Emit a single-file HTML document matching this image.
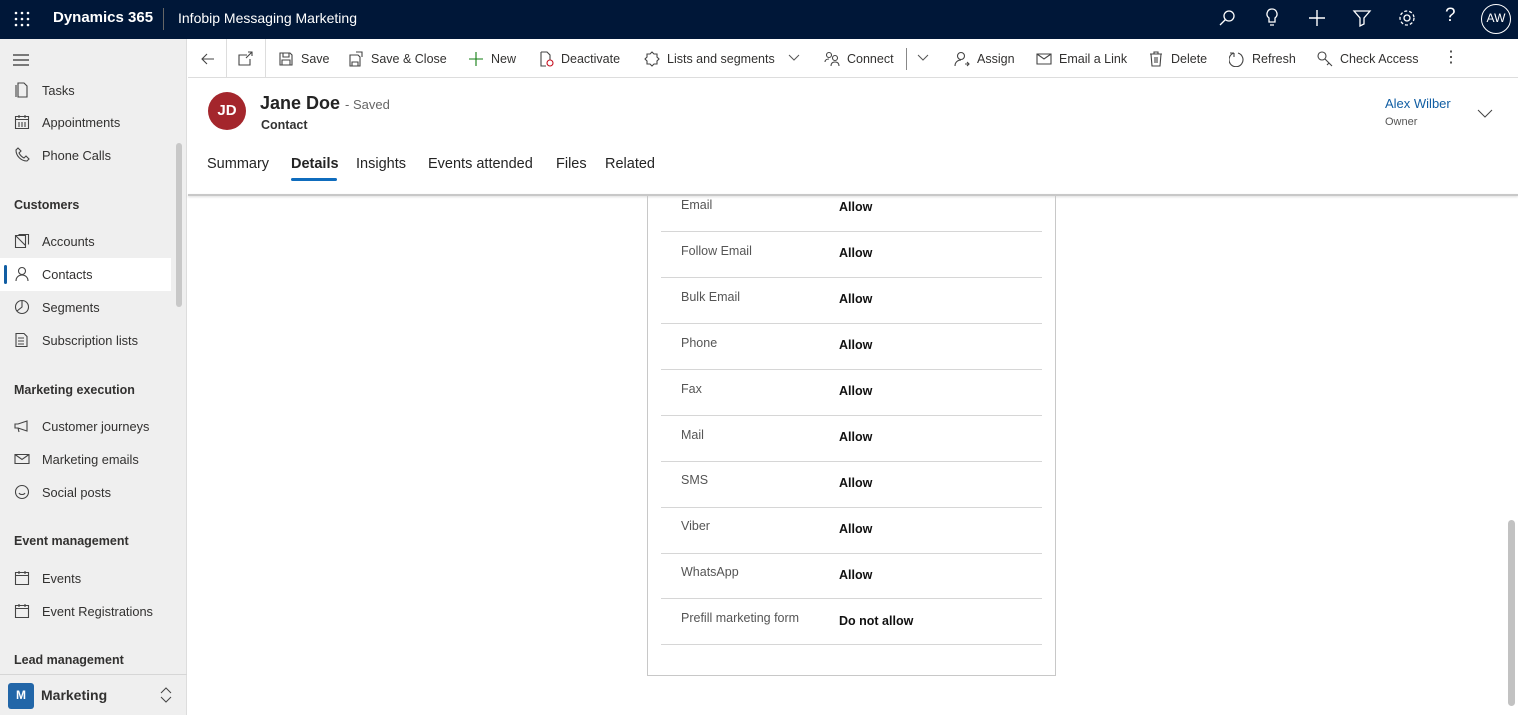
<!DOCTYPE html>
<html><head><meta charset="utf-8"><style>
*{box-sizing:border-box;margin:0;padding:0}
body{width:1518px;height:715px;overflow:hidden;font-family:"Segoe UI","Liberation Sans",sans-serif;background:#fff;position:relative;color:#323130}
.top{position:absolute;left:0;top:0;width:1518px;height:39px;background:#001738;color:#fff}
.abs{position:absolute}
.side{position:absolute;left:0;top:39px;width:187px;height:676px;background:#efefef;border-right:1px solid #ddd}
.ni{position:absolute;left:14px;font-size:12.8px;color:#323130;display:flex;align-items:center}
.ni svg{width:16px;height:16px;margin-right:12px;fill:none;stroke:#444;stroke-width:1.1}
.sh{position:absolute;left:14px;font-size:12.5px;font-weight:600;color:#323130}
.cmd{position:absolute;top:39px;left:188px;right:0;height:39px;border-bottom:1px solid #ddd;font-size:12.5px;color:#323130}
.ci{position:absolute;top:0;height:39px;display:flex;align-items:center}
.ci svg{width:16px;height:16px;margin-right:7px;fill:none;stroke:#444;stroke-width:1.1}
.tab{position:absolute;top:156px;font-size:14.5px;color:#242424}
.lab{position:absolute;left:681px;font-size:12.5px;color:#555}
.val{position:absolute;left:839px;font-size:12.5px;font-weight:700;color:#111}
.sep{position:absolute;left:661px;width:381px;height:1px;background:#d6d6d6}
</style></head><body>
<div class="top">
 <svg class="abs" style="left:14px;top:11px" width="16" height="16" fill="#fff"><g><circle cx="2" cy="2" r="1.3"/><circle cx="8" cy="2" r="1.3"/><circle cx="14" cy="2" r="1.3"/><circle cx="2" cy="8" r="1.3"/><circle cx="8" cy="8" r="1.3"/><circle cx="14" cy="8" r="1.3"/><circle cx="2" cy="14" r="1.3"/><circle cx="8" cy="14" r="1.3"/><circle cx="14" cy="14" r="1.3"/></g></svg>
 <div class="abs" style="left:53px;top:9px;font-size:15px;font-weight:600">Dynamics 365</div>
 <div class="abs" style="left:163px;top:8px;width:1px;height:22px;background:#666"></div>
 <div class="abs" style="left:178px;top:10px;font-size:14px">Infobip Messaging Marketing</div>
 <svg class="abs" style="left:1217px;top:8px" width="20" height="20" fill="none" stroke="#fff" stroke-width="1.3"><circle cx="12" cy="8" r="5"/><path d="M8.5 11.5L3 17"/></svg>
 <svg class="abs" style="left:1262px;top:7px" width="20" height="22" fill="none" stroke="#fff" stroke-width="1.3"><path d="M10 2a5 5 0 0 0-3 9v4h6v-4a5 5 0 0 0-3-9zM8 18h4"/></svg>
 <svg class="abs" style="left:1307px;top:8px" width="20" height="20" stroke="#fff" stroke-width="1.4"><path d="M10 2v16M2 10h16"/></svg>
 <svg class="abs" style="left:1352px;top:8px" width="20" height="20" fill="none" stroke="#fff" stroke-width="1.3"><path d="M2 3h16l-6 7v6l-4 2v-8z"/></svg>
 <svg class="abs" style="left:1397px;top:8px" width="20" height="20" fill="none" stroke="#fff" stroke-width="1.3"><circle cx="10" cy="10" r="3"/><circle cx="10" cy="10" r="7" stroke-dasharray="3 2"/></svg>
 <div class="abs" style="left:1445px;top:5px;font-size:19px">?</div>
 <div class="abs" style="left:1481px;top:4px;width:30px;height:30px;border:1.5px solid #fff;border-radius:50%;font-size:12px;text-align:center;line-height:27px">AW</div>
</div>

<div class="side">
 <svg class="abs" style="left:13px;top:14px" width="16" height="14" stroke="#333" stroke-width="1.2"><path d="M0 2h16M0 7h16M0 12h16"/></svg>
 <div class="ni" style="top:43px"><svg viewBox="0 0 16 16"><path d="M4 1h6l3 3v11H4zM2 3v12"/></svg>Tasks</div>
 <div class="ni" style="top:75px"><svg viewBox="0 0 16 16"><path d="M1.5 2.5h13v12h-13zM1.5 5.5h13M5 1v3M11 1v3M5 8v5M8 8v5M11 8v5"/></svg>Appointments</div>
 <div class="ni" style="top:108px"><svg viewBox="0 0 16 16"><path d="M4 1l3 3-2 2c1 2 3 4 5 5l2-2 3 3-2 2C7 14 2 9 2 3z"/></svg>Phone Calls</div>
 <div class="sh" style="top:159px">Customers</div>
 <div class="ni" style="top:194px"><svg viewBox="0 0 16 16"><path d="M1.5 2.5h10v12h-10zM4.5 1.5h10v10M1.5 2.5l10 10"/></svg>Accounts</div>
 <div class="abs" style="left:0;top:219px;width:171px;height:33px;background:#fff"></div>
 <div class="abs" style="left:4px;top:226px;width:3px;height:19px;background:#115ea3;border-radius:2px"></div>
 <div class="ni" style="top:227px"><svg viewBox="0 0 16 16"><circle cx="8" cy="5" r="3.5"/><path d="M2 15c0-4 3-6 6-6s6 2 6 6"/></svg>Contacts</div>
 <div class="ni" style="top:260px"><svg viewBox="0 0 16 16"><circle cx="8" cy="8" r="6.5"/><path d="M8 1.5v6.5l-5 4"/></svg>Segments</div>
 <div class="ni" style="top:293px"><svg viewBox="0 0 16 16"><path d="M2 1.5h8l3 3v10H2zM4 6h6M4 9h6M4 12h6"/></svg>Subscription lists</div>
 <div class="sh" style="top:344px">Marketing execution</div>
 <div class="ni" style="top:379px"><svg viewBox="0 0 16 16"><path d="M1 6h3l9-3v10L4 10H1zM4 10l1 4"/></svg>Customer journeys</div>
 <div class="ni" style="top:412px"><svg viewBox="0 0 16 16"><path d="M1 3.5h14v9H1zM1 3.5l7 5 7-5"/></svg>Marketing emails</div>
 <div class="ni" style="top:445px"><svg viewBox="0 0 16 16"><circle cx="8" cy="8" r="6.5"/><path d="M5 9c1 2 5 2 6 0"/></svg>Social posts</div>
 <div class="sh" style="top:495px">Event management</div>
 <div class="ni" style="top:531px"><svg viewBox="0 0 16 16"><path d="M1.5 2.5h13v12h-13zM1.5 5.5h13M5 1v3M11 1v3"/></svg>Events</div>
 <div class="ni" style="top:564px"><svg viewBox="0 0 16 16"><path d="M1.5 2.5h13v12h-13zM1.5 5.5h13M5 1v3M11 1v3"/></svg>Event Registrations</div>
 <div class="sh" style="top:614px">Lead management</div>
 <div class="abs" style="left:0;top:635px;width:187px;height:1px;background:#d6d6d6"></div>
 <div class="abs" style="left:8px;top:644px;width:26px;height:26px;background:#2266a8;border-radius:3px;color:#fff;font-size:12px;font-weight:700;text-align:center;line-height:24px">M</div>
 <div class="abs" style="left:41px;top:648px;font-size:14px;font-weight:600">Marketing</div>
 <svg class="abs" style="left:159px;top:647px" width="14" height="18" fill="none" stroke="#444"><path d="M2 7l5-5 5 5M2 11l5 5 5-5"/></svg>
 <div class="abs" style="left:176px;top:104px;width:6px;height:164px;background:#c8c8c8;border-radius:3px"></div>
</div>

<div class="cmd">
 <svg class="abs" style="left:12px;top:12px" width="16" height="16" fill="none" stroke="#444" stroke-width="1.1"><path d="M14 8H2M7 3L2 8l5 5"/></svg>
 <div class="abs" style="left:38px;top:0;width:1px;height:39px;background:#ddd"></div>
 <svg class="abs" style="left:49px;top:12px" width="16" height="16" fill="none" stroke="#444" stroke-width="1.1"><path d="M10 4H2v10h11V8M9 7l6-6M11 1h4v4"/></svg>
 <div class="abs" style="left:77px;top:0;width:1px;height:39px;background:#ddd"></div>
 <div class="ci" style="left:90px"><svg viewBox="0 0 16 16"><path d="M2 2h10l2 2v10H2zM5 2v4h6V2M4 14V9h8v5"/></svg>Save</div>
 <div class="ci" style="left:160px"><svg viewBox="0 0 16 16"><path d="M2 4h8l2 2v9H2zM4 15v-4h6v4M8 1h6v5"/></svg>Save &amp; Close</div>
 <div class="ci" style="left:280px"><svg viewBox="0 0 16 16" style="stroke:#107c10"><path d="M8 1v14M1 8h14"/></svg>New</div>
 <div class="ci" style="left:350px"><svg viewBox="0 0 16 16"><path d="M3 1h6l3 3v5M3 1v14h5"/><circle cx="12" cy="12" r="3" stroke="#c50f1f"/></svg>Deactivate</div>
 <div class="ci" style="left:456px"><svg viewBox="0 0 16 16"><path d="M8 1l2 2h3v3l2 2-2 2v3h-3l-2 2-2-2H3v-3L1 8l2-2V3h3z"/></svg>Lists and segments</div>
 <svg class="abs" style="left:600px;top:15px" width="12" height="8" fill="none" stroke="#555"><path d="M1 1l5 5 5-5"/></svg>
 <div class="ci" style="left:636px"><svg viewBox="0 0 16 16"><circle cx="5" cy="4" r="2.5"/><circle cx="11" cy="7" r="2.5"/><path d="M1 11c0-2 2-3 4-3M7 15c0-3 2-4 4-4s4 1 4 4"/></svg>Connect</div>
 <div class="abs" style="left:718px;top:9px;width:1px;height:22px;background:#888"></div>
 <svg class="abs" style="left:729px;top:15px" width="12" height="8" fill="none" stroke="#555"><path d="M1 1l5 5 5-5"/></svg>
 <div class="ci" style="left:766px"><svg viewBox="0 0 16 16"><circle cx="7" cy="5" r="3.5"/><path d="M1 15c0-4 3-6 6-6M11 13h4M13 11l2 2-2 2" /></svg>Assign</div>
 <div class="ci" style="left:848px"><svg viewBox="0 0 16 16"><path d="M1 3h14v10H1zM1 3l7 5 7-5"/></svg>Email a Link</div>
 <div class="ci" style="left:960px"><svg viewBox="0 0 16 16"><path d="M2 3h12M6 3V1h4v2M3 3l1 12h8l1-12M7 6v6M9 6v6"/></svg>Delete</div>
 <div class="ci" style="left:1041px"><svg viewBox="0 0 16 16"><path d="M5 2a7 7 0 1 0 4 0M5 2v4M5 2H1"/></svg>Refresh</div>
 <div class="ci" style="left:1129px"><svg viewBox="0 0 16 16"><circle cx="5" cy="5" r="4"/><path d="M8 8l7 7M12 12l-2 2"/></svg>Check Access</div>
 <div class="abs" style="left:1255px;top:10px;font-size:16px;line-height:18px">⋮</div>
</div>

<div class="abs" style="left:208px;top:92px;width:38px;height:38px;border-radius:50%;background:#a4262c;color:#fff;font-size:15px;font-weight:600;text-align:center;line-height:38px">JD</div>
<div class="abs" style="left:260px;top:93px;font-size:18px;font-weight:600;color:#242424">Jane Doe <span style="font-size:13px;font-weight:400;color:#666">- Saved</span></div>
<div class="abs" style="left:261px;top:118px;font-size:12.5px;font-weight:600;color:#333">Contact</div>
<div class="abs" style="left:1385px;top:96px;font-size:13px;color:#115ea3">Alex Wilber</div>
<div class="abs" style="left:1385px;top:116px;font-size:11px;color:#555">Owner</div>
<svg class="abs" style="left:1477px;top:109px" width="16" height="10" fill="none" stroke="#444"><path d="M1 1l7 7 7-7"/></svg>

<div class="tab" style="left:207px">Summary</div>
<div class="tab" style="left:291px;font-weight:600">Details</div>
<div class="abs" style="left:291px;top:178px;width:46px;height:3px;background:#0f6cbd;border-radius:2px"></div>
<div class="tab" style="left:356px">Insights</div>
<div class="tab" style="left:428px">Events attended</div>
<div class="tab" style="left:556px">Files</div>
<div class="tab" style="left:605px">Related</div>
<div class="abs" style="left:188px;top:194px;width:1330px;height:2px;background:#c8c8c8;box-shadow:0 1px 2px rgba(0,0,0,.15)"></div>

<div class="abs" style="left:647px;top:196px;width:409px;height:480px;border:1px solid #c8c8c8;border-top:none"></div>
<div class="lab" style="top:198px">Email</div><div class="val" style="top:200px">Allow</div><div class="sep" style="top:231px"></div>
<div class="lab" style="top:244px">Follow Email</div><div class="val" style="top:246px">Allow</div><div class="sep" style="top:277px"></div>
<div class="lab" style="top:290px">Bulk Email</div><div class="val" style="top:292px">Allow</div><div class="sep" style="top:323px"></div>
<div class="lab" style="top:336px">Phone</div><div class="val" style="top:338px">Allow</div><div class="sep" style="top:369px"></div>
<div class="lab" style="top:382px">Fax</div><div class="val" style="top:384px">Allow</div><div class="sep" style="top:415px"></div>
<div class="lab" style="top:428px">Mail</div><div class="val" style="top:430px">Allow</div><div class="sep" style="top:461px"></div>
<div class="lab" style="top:473px">SMS</div><div class="val" style="top:476px">Allow</div><div class="sep" style="top:507px"></div>
<div class="lab" style="top:519px">Viber</div><div class="val" style="top:522px">Allow</div><div class="sep" style="top:553px"></div>
<div class="lab" style="top:565px">WhatsApp</div><div class="val" style="top:568px">Allow</div><div class="sep" style="top:598px"></div>
<div class="lab" style="top:611px">Prefill marketing form</div><div class="val" style="top:614px">Do not allow</div><div class="sep" style="top:644px"></div>

<div class="abs" style="left:1508px;top:520px;width:7px;height:186px;background:#c2c2c2;border-radius:4px"></div>
</body></html>
